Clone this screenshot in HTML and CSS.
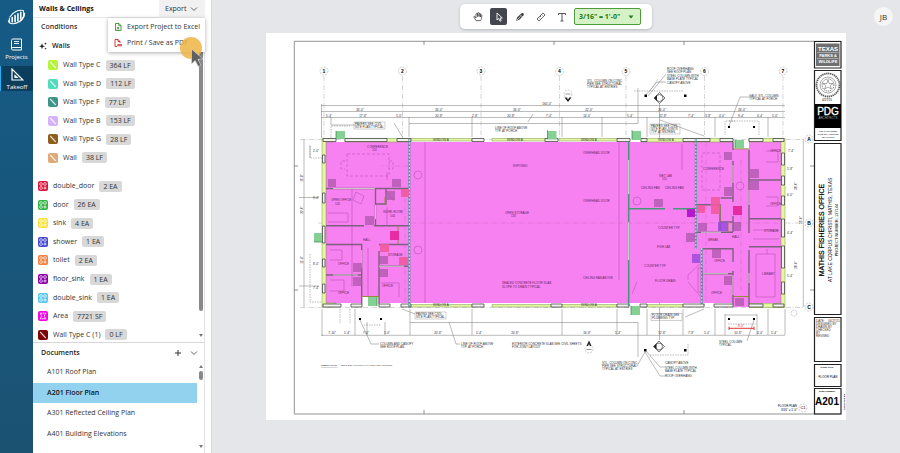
FILE: index.html
```
<!DOCTYPE html>
<html lang="en">
<head>
<meta charset="utf-8">
<title>Walls &amp; Ceilings – Takeoff</title>
<link rel="stylesheet" href="styles.css">
</head>
<body>
<svg class="defs" aria-hidden="true">
  <defs>
    <symbol id="line" viewBox="0 0 9 9"><path d="M2 1.800 7 7.200" stroke="#fff" stroke-width="1" stroke-opacity=".8"/></symbol>
    <symbol id="count" viewBox="0 0 9 9"><g fill="none" stroke="#fff" stroke-width=".8" stroke-opacity=".85"><rect x="1.600" y="1.600" width="2.200" height="2.200" rx=".6"/><rect x="5.200" y="1.600" width="2.200" height="2.200" rx=".6"/><rect x="1.600" y="5.200" width="2.200" height="2.200" rx=".6"/><path d="M6.300 4.900v2.800M4.900 6.300h2.800"/></g></symbol>
    <symbol id="area" viewBox="0 0 9 9"><path d="M2 2h5L5.600 4.500 7 7H2l1.300-2.500z" fill="none" stroke="#fff" stroke-width=".9" stroke-dasharray="1.600 .5"/></symbol>
    <symbol id="chevron" viewBox="0 0 8 8"><path d="M1 2.500 4 5.500 7 2.500" fill="none" stroke="#555" stroke-width=".9"/></symbol>
  </defs>
</svg>
<div class="app">
  <nav class="rail" aria-label="Main">
    <a class="brand" href="#" aria-label="Home">
      <svg viewBox="0 0 20 20"><g fill="none" stroke="#fff" stroke-linecap="round"><path d="M3 9C6 4 12 1 17 2c2 4 0 9-4 12" stroke-width="1.100"/><path d="M1.500 13c1 4 7 4 12 .5 3-2 5-6 5-8.500" stroke-width="1.200"/><path d="M5.500 9.500v4.500M8.500 7.500v6.500M11.500 5.500v7.500M14.500 4v7" stroke-width="1.700"/><path d="M2.500 10.500v3" stroke-width="1.200"/></g></svg>
    </a>
    <a class="rail-link" href="#">
      <svg viewBox="0 0 12 13"><g fill="none" stroke="#fff" stroke-width="1"><path d="M1 2.500C1 1.500 1.500 1 2.500 1H11v8.500H2.500C1.500 9.500 1 10 1 10.800S1.500 12 2.500 12H11V9.500M1 2.500v8.500"/><path d="M3.500 3.500h5M3.500 5.500h5" stroke-width=".9"/></g></svg>
      Projects</a>
    <a class="rail-link current" href="#" aria-current="page">
      <svg viewBox="0 0 13 13"><path d="M1 1v11h11zM4 7.500V9.500h2.200z" fill="none" stroke="#fff" stroke-width="1.200"/></svg>
      Takeoff</a>
  </nav>

  <aside class="panel">
    <header class="panel-head">
      <h1>Walls &amp; Ceilings</h1>
      <div class="export">
        <button class="export-button" type="button" aria-expanded="true">Export <svg><use href="#chevron"/></svg></button>
        <div class="menu">
          <button type="button"><svg viewBox="0 0 8 8"><path d="M1.500.5h3.500L7 2.500v5H1.500zM4.800.5v2.200H7M3 4l2 2.500M5 4 3 6.500" fill="none" stroke="#3c8f2c" stroke-width=".9"/></svg>Export Project to Excel</button>
          <button type="button"><svg viewBox="0 0 8 8"><path d="M3 7.500H1v-7h3l2 2v1.500M4 .5v2h2" fill="none" stroke="#cf2b2b" stroke-width=".9"/><path d="M3.300 5h4.700v2.300H3.300z" fill="#cf2b2b" opacity=".75"/></svg>Print / Save as PDF</button>
        </div>
        <svg class="pointer" viewBox="0 0 28 34" aria-hidden="true"><circle cx="12" cy="12" r="11" fill="#edb445" opacity=".86"/><path d="M12.500 13v15l3.700-3.500 3 6 2.700-1.400-3-5.800 5.100-.3z" fill="#606060" stroke="#ddd" stroke-width=".6"/></svg>
      </div>
    </header>

    <section class="conditions">
      <div class="conditions-body">
        <h2>Conditions</h2>
        <h3><svg viewBox="0 0 8 8"><path d="M3 1.200 3.800 3.500 6 4.300 3.800 5.100 3 7.300 2.200 5.100 0 4.300 2.200 3.500zM6.400.3l.4 1 1 .4-1 .4-.4 1-.4-1-1-.4 1-.4zM6.600 5.400l.3.900.9.300-.9.300-.3.900-.3-.9-.9-.3.900-.3z" fill="#222"/></svg>Walls</h3>
        <ul class="rows walls">
          <li><svg class="chip lime"><use href="#line"/></svg>Wall Type C <span class="qty">364 LF</span></li>
          <li><svg class="chip aqua"><use href="#line"/></svg>Wall Type D <span class="qty">112 LF</span></li>
          <li><svg class="chip teal"><use href="#line"/></svg>Wall Type F <span class="qty">77 LF</span></li>
          <li><svg class="chip lilac"><use href="#line"/></svg>Wall Type B <span class="qty">153 LF</span></li>
          <li><svg class="chip brown"><use href="#line"/></svg>Wall Type G <span class="qty">28 LF</span></li>
          <li><svg class="chip tan"><use href="#line"/></svg>Wall <span class="qty">38 LF</span></li>
        </ul>
        <ul class="rows items">
          <li><svg class="chip red"><use href="#count"/></svg>double_door <span class="qty">2 EA</span></li>
          <li><svg class="chip green"><use href="#count"/></svg>door <span class="qty">26 EA</span></li>
          <li><svg class="chip yellow"><use href="#count"/></svg>sink <span class="qty">4 EA</span></li>
          <li><svg class="chip blue"><use href="#count"/></svg>shower <span class="qty">1 EA</span></li>
          <li><svg class="chip orange"><use href="#count"/></svg>toilet <span class="qty">2 EA</span></li>
          <li><svg class="chip purple"><use href="#count"/></svg>floor_sink <span class="qty">1 EA</span></li>
          <li><svg class="chip sky"><use href="#count"/></svg>double_sink <span class="qty">1 EA</span></li>
          <li><svg class="chip magenta"><use href="#area"/></svg>Area <span class="qty">7721 SF</span></li>
          <li><svg class="chip maroon"><use href="#line"/></svg>Wall Type C (1) <span class="qty">0 LF</span></li>
        </ul>
      </div>
      <div class="scroll"><span class="thumb long"></span><span class="down"></span></div>
    </section>

    <section class="documents">
      <header class="documents-head">
        <h2>Documents</h2>
        <button type="button" aria-label="Add document"><svg viewBox="0 0 8 8"><path d="M4 1v6M1 4h6" stroke="#333" stroke-width="1"/></svg></button>
        <button type="button" aria-label="Collapse"><svg><use href="#chevron"/></svg></button>
      </header>
      <div class="documents-body">
        <ul>
          <li><a href="#">A101 Roof Plan</a></li>
          <li><a class="selected" href="#">A201 Floor Plan</a></li>
          <li><a href="#">A301 Reflected Ceiling Plan</a></li>
          <li><a href="#">A401 Building Elevations</a></li>
        </ul>
        <div class="scroll"><span class="up"></span><span class="thumb short"></span><span class="down"></span></div>
      </div>
    </section>
  </aside>

  <main class="canvas">
    <div class="topbar">
      <div class="toolbar">
        <button type="button" aria-label="Pan"><svg viewBox="0 0 10 10"><path d="M3 6 1.700 4.400C1 4 .6 4.600 1 5.200L3 8.600h4.500C8.500 7.500 8.800 6 8.800 3.300c0-.9-1.300-.9-1.300 0V5 2c0-.9-1.400-.9-1.400 0v2.600V1.300c0-.9-1.500-.9-1.500 0v3.300V2c0-.9-1.600-.9-1.600 0z" fill="none" stroke="#444" stroke-width=".8"/></svg></button>
        <button type="button" class="active" aria-label="Select"><svg viewBox="0 0 10 10"><path d="M3 1v7l1.700-1.500L6 9.200l1.200-.6L6 6h2.300z" fill="none" stroke="#fff" stroke-width=".9"/></svg></button>
        <button type="button" aria-label="Highlight"><svg viewBox="0 0 10 10"><path d="M1 9 2.300 5.200 6.500 1.300C8 .3 9.500 1.800 8.500 3.300L4.700 7.600z" fill="#444"/><path d="M1.800 8.200 5.500 4.500M5.200 2.800l2 2" stroke="#fff" stroke-width=".7"/></svg></button>
        <button type="button" aria-label="Measure"><svg viewBox="0 0 10 10"><path d="M1 7 7 1l2 2-6 6zM5.500 2.500l1 1M4 4l1 1M2.500 5.500l1 1" fill="none" stroke="#444" stroke-width=".8"/></svg></button>
        <button type="button" aria-label="Text"><svg viewBox="0 0 10 10"><path d="M1.500 3V1.500h7V3M5 1.500v7.500M3.500 9h3" fill="none" stroke="#444" stroke-width=".9"/></svg></button>
        <label class="scale">
          <select aria-label="Scale"><option>3/16" = 1'-0"</option></select>
          <svg viewBox="0 0 6 4"><path d="M.5.500h5L3 3.500z" fill="#237a12"/></svg>
        </label>
      </div>
      <button class="avatar" type="button" aria-label="Account">JB</button>
    </div>

    <svg class="sheet" viewBox="266 33 580 387" role="img" aria-label="A201 Floor Plan">
      <rect x="266" y="33" width="580" height="387" fill="#fff"/>
      <g fill="none" stroke="#777" stroke-width=".8">
        <path d="M841 41.300H294.300V414H841M424 41v4M554 41v4M684 41v4M294 166h4M294 290h4M810 166h4M810 290h4M684 414v-4M424 414v-4"/>
      </g>

      <!-- grid bubbles and centre lines -->
      <g fill="none" stroke="#aaa" stroke-width=".5" stroke-dasharray="5 1.500 1 1.500">
        <path d="M324 76v62M402.500 76v62M481 76v230M559.500 76v62M626 76v62M704.500 76v232M783 76v62M300 139.500h504M318 223h486M300 307.500h504"/>
      </g>
      <g class="bubbles">
        <circle cx="324" cy="71" r="4"/><circle cx="402.500" cy="71" r="4"/><circle cx="481" cy="71" r="4"/><circle cx="559.500" cy="71.500" r="4"/><circle cx="626" cy="71.500" r="4"/><circle cx="704.500" cy="71.500" r="4"/><circle cx="783" cy="71" r="4"/>
        <circle cx="809" cy="139" r="4"/><circle cx="809" cy="223" r="4"/><circle cx="809" cy="307" r="4"/><circle cx="803" cy="408" r="4"/><circle cx="794" cy="313" r="3"/><circle cx="568" cy="94" r="4"/><circle cx="589" cy="349" r="4"/>
      </g>
      <g class="bubble-text">
        <text x="324" y="73">1</text><text x="402.500" y="73">2</text><text x="481" y="73">3</text><text x="559.500" y="73">4</text><text x="626" y="73">5</text><text x="704.500" y="73">6</text><text x="783" y="73">7</text><text x="809" y="141">A</text><text x="809" y="225">B</text><text x="809" y="309">C</text><text class="thin" x="803" y="409">C1</text>
      </g>

      <!-- dimension strings -->
      <g fill="none" stroke="#777" stroke-width=".5">
        <path d="M321 105.500H785M321 111.500H785M321 117.500H785M321 335.300H785M304 139v168M803.300 139v168M310 145v13M299 197.500h20M299 286h20"/>
        <path d="M321.500 104v34M409 117v20M472 117v20M602 117v20M647 117v20M715 117v20M768 117v20M322 309v27M355 309v26M367 322v13M385 322v13M410 309v26M472 309v26M562 309v26M617 309v26M647 309v26M683 309v26M715 309v26M725 314v21M757 314v21M768 309v26M785 309v26M409 123.500h229V88M410 322.500h228V357M562 117v20M659.500 103v48M659.500 290v50"/>
        <path d="M394 123l9 15M355 125h-24v-8M360 320l11 24h8M449 322l7 22h4M402 309l13 5M645 96l12-14h9M648 96l18-22M729 126l11-29h9M660 120l44 16M704 309l-19 8M754 320l-7 21M645 352l-8 14M646 351l14 16h5M645 352l15 24h5M528 122l5-8"/>
        <path d="M729 121h30v14M725 135v-14h10M634 91h50M650 91l8-12M650 355h38v-12M331 138v-12h19M340 309v14M350 309v14M310 146v12h12M310 254v48h12M728 324h28M364 325h17" stroke-dasharray="1.500 1"/>
        <path d="M725 315h32"/>
      </g>
      <path d="M729 328.300h25M729 326.500v3.500M754 326.500v3.500" stroke="#d22" stroke-width=".9"/>
      <g class="dims" fill="#222">
        <text x="547" y="105">160'-0"</text>
        <text x="360" y="111">26'-0"</text><text x="439" y="111">26'-0"</text><text x="517" y="111">26'-0"</text><text x="589" y="111">22'-0"</text><text x="662" y="111">26'-0"</text><text x="742" y="111">26'-0"</text>
        <text x="329" y="117">5'-4"</text><text x="363" y="117">17'-8"</text><text x="399" y="117">5'-0"</text><text x="439" y="117">20'-8"</text><text x="475" y="117">2'-8"</text><text x="511" y="117">20'-8"</text><text x="549" y="117">7'-4"</text><text x="587" y="117">14'-0"</text><text x="630" y="117">5'-4"</text><text x="663" y="117">12'-8"</text><text x="691" y="117">7'-4"</text><text x="708" y="117">3'-8"</text><text x="722" y="117">4'-0"</text><text x="741" y="117">9'-4"</text><text x="760" y="117">4'-4"</text><text x="775" y="117">5'-0"</text>
        <text x="332" y="334">7'-10"</text><text x="347" y="334">5'-4"</text><text x="366" y="334">7'-0"</text><text x="387" y="334">5'-0"</text><text x="438" y="334">20'-8"</text><text x="479" y="334">5'-4"</text><text x="515" y="334">20'-8"</text><text x="587" y="334">16'-8"</text><text x="618" y="334">5'-4"</text><text x="662" y="334">12'-8"</text><text x="691" y="334">7'-8"</text><text x="707" y="334">5'-0"</text><text x="738" y="334">10'-8"</text><text x="760" y="334">4'-0"</text><text x="774" y="334">5'-4"</text><text x="741" y="327" fill="#d22">8'-0"</text>
        <text transform="translate(303 210) rotate(-90)">20'-0"</text><text transform="translate(303 260) rotate(-90)">11'-4"</text><text transform="translate(303 178) rotate(-90)">16'-8"</text><text transform="translate(802 220) rotate(-90)">56'-0"</text><text transform="translate(797 186) rotate(-90)">28'-0"</text><text transform="translate(797 265) rotate(-90)">28'-0"</text>
        <text x="791" y="152">7'-4"</text><text x="790" y="170">5'-8"</text><text x="790" y="196">6'-0"</text><text x="790" y="234">4'-4"</text><text x="790" y="277">5'-4"</text><text x="316" y="152">2'-0"</text><text x="316" y="199">9'-4"</text><text x="316" y="265">8'-0"</text><text x="316" y="289">7'-4"</text>
      </g>

      <!-- area takeoff -->
      <path fill="#f881f1" d="M326 142H733V149H749V142H781V303H749V307H733V303H379V297H361V303H326z"/>
      <!-- exterior walls -->
      <g fill="#e4f8a0" stroke="#7f9150" stroke-width=".5">
        <path d="M322 138.500h11v3.500h-7v161h10v4h-14zM345 138.500h64v3.500h-64zM409 138.500h63v2.500h-63zM492 138.500h56v2.500h-56zM559 138.500h60v2.500h-60zM641 138.500h92v3.500h-92zM749 138.500h36v169h-36v-4h32v-161.500h-32zM409 304.500h63v2.500h-63zM492 304.500h125v2.500h-125zM641 304.500h42v2.500h-42z"/>
      </g>
      <g fill="#f3f3ee" stroke="#333" stroke-width=".7">
        <path d="M323 138.500h13v3h-13zM345 138.500h42v3h-42zM397 138.500h14v3h-14zM472 138.500h12v3h-12zM545 138.500h13v3h-13zM617 138.500h13v3h-13zM641 138.500h6v3h-6zM683 138.500h27v3h-27zM720 138.500h13v3h-13zM749 138.500h14v3h-14zM773 138.500h11v3h-11zM323 304h18v3h-18zM351 304h11v3h-11zM379 304h11v3h-11zM401 304h10v3h-10zM472 304h12v3h-12zM551 304h11v3h-11zM617 304h12v3h-12zM640 304h7v3h-7zM683 304h21v3h-21zM714 304h19v3h-19zM749 304h14v3h-14zM773 304h11v3h-11zM781.500 153h3v12h-3zM781.500 176h3v9h-3zM781.500 196h3v9h-3zM781.500 219h3v18h-3zM781.500 246h3v22h-3zM781.500 282h3v12h-3zM322.500 155h2.500v8h-2.500zM322.500 193h2.500v10h-2.500zM322.500 226h2.500v17h-2.500zM322.500 259h2.500v8h-2.500zM322.500 284h2.500v9h-2.500z"/>
      </g>
      <!-- partitions -->
      <g fill="none" stroke="#7d617f" stroke-width="1.400">
        <path d="M326 188.500h82M375.500 189v36.500M326 225.700h38M374 225.700h35M326 244.500h35.700V304M326 275h35.700M379 304V251M379 244.500h29M379 266.300h30M386 189v15h-10M733 142v8M733 161v41M733 216v16M696 204.700h24v26M720.700 198h12.600M720.700 222h12.600M696 232.300h37M701 248.700h32V262M701 273.700h32M733 271v33M749 150v83M749 250v54M749 180h32M749 218.700h32M749 246.700h32"/>
      </g>
      <g fill="none" stroke="#f2f2ea" stroke-width=".7">
        <path d="M333 188.500h42M333 275h25M379 266.300h25M361.700 250v18M375.500 205v14M733 165v18M733 275v20M749 190v15M749 273v10M703 273.700h25M701 232.300h20"/>
      </g>
      <g fill="none" stroke="#8a8a28" stroke-width=".9"><path d="M361 296.500h18M733 296.500h16M733 148.800h16M398 225.700v18.500M720 205v16M728 222v10M385 197v8"/></g>
      <path d="M628.700 142v164M629 208.700h36M673 208.700h23" fill="none" stroke="#47987b" stroke-width="1.600"/>
      <path d="M628.700 160v34M628.700 222v38" fill="none" stroke="#ccecdd" stroke-width="1"/>
      <g fill="none" stroke-width="2"><path d="M409.300 139v168M695.800 139v110M701.700 248v56" stroke="#4d8d91"/><path d="M409.300 139v168M695.800 139v110M701.700 248v56" stroke="#b5dbe7" stroke-width="1.200" stroke-dasharray="2 1.500"/></g>

      <!-- furniture and interior references -->
      <g fill="none" stroke="#9a3d99" stroke-width=".4">
        <path d="M347 154h42v22h-42zM345 161h-4v8h4M389 161h4v8h-4M702 153h18v37h-18z" stroke-dasharray="3 2"/>
        <path d="M756 254h19v43h-19zM767 249v5M766 151h12v11h-12M766 197h12v9h-12M753 230h26M753 239h26M356 192l8 4-3 8-8-4zM328 213h20v9h-20M330 250h12v10h-12M330 280h14v11h-14M381 283h18v14M386 191l8 10M425 142v161M619 142v138M688 275l14-13M688 282l12 14M688 280v-5M698 268h4v24h-4zM387 172v8M352 189v98M368 248v48M387 207v18M682 144v26M637 282l-5 12"/>
        <path d="M411 223h286M409 166h-28M701 223h79M741 160v130M405 189v115M706 142v160" stroke-dasharray="5 1.500 1 1.500" stroke="#bf61b8"/>
        <circle cx="418" cy="175" r="4"/><circle cx="418" cy="250" r="4"/><circle cx="637" cy="201" r="4"/><circle cx="740" cy="186" r="4"/>
      </g>

      <!-- counted symbols -->
      <g fill="#a654a7"><path d="M328 179h8v8h-8zM392 179h9v8h-9zM387 191h8v9h-8zM365 216h9v9h-9zM379 256h9v8h-9zM353 263h9v9h-9zM353 277h9v9h-9zM379 269h9v8h-9zM654 199h9v8h-9zM724 152h8v8h-8zM724 187h8v9h-8zM750 169h9v9h-9zM750 181h9v9h-9zM698 223h9v8h-9zM733 222h8v9h-8zM686 233h9v9h-9zM712 249h9v9h-9zM724 276h8v9h-8zM735 298h9v8h-9z" opacity=".7"/></g>
      <path fill="#ef5a9e" opacity=".9" d="M401 189h8v8h-8zM380 244h9v8h-9zM399 257h9v8h-9zM711 197h9v8h-9zM697 205h8v8h-8zM711 205h9v9h-9z"/>
      <path fill="#e62ba3" d="M390 231h9v9h-9zM733 206h9v9h-9z"/>
      <path fill="#b717ce" d="M687 209h8v8h-8z"/>
      <path fill="#9548dc" d="M718 222h10v9h-10zM692 254h8v9h-8z" opacity=".8"/>
      <path fill="#85d193" d="M336 131h9v8h-9zM547.500 131h9v8.500h-9zM632 131h9v9h-9zM735 140h9v8h-9zM314 233h8v9h-8zM368 297h9v9h-9zM631 306h9v9h-9z"/>
      <g stroke="#24713a" stroke-width=".6"><path d="M336 131v8M547.500 130v9M632 130v9M735 140v8M314 242h8M377 297v9M631 315v-9"/></g>

      <!-- columns, section and elevation marks -->
      <path d="M644.500 94.500h2.500v2.500h-2.500zM684 94.500h2.500v2.500h-2.500zM728 126h2v2h-2zM753 126h2v2h-2zM359 318h2v2h-2zM380 318h2v2h-2zM644 349h2.500v2.500h-2.500zM684 349h2.500v2.500h-2.500zM728 318h2v2h-2zM753 318h2v2h-2z"/>
      <g fill="#fff" stroke="#222" stroke-width=".6"><path d="M654 98l5.500-5.500L665 98l-5.500 5.500zM653.500 346.500l5.500-5.500 5.500 5.500-5.500 5.500z"/><circle cx="659.500" cy="98" r="3.500"/><circle cx="659" cy="346.500" r="3.500"/></g>
      <path d="M654 98l3-3v6zM653.500 346.500l3-3v6zM564.500 97.500h2l1.500 2 1.500-2h2L568 102zM586.500 346l2.500-5.500 2.500 5.500h-1.500l-1-2-1 2z" fill="#222"/>
      <path d="M565.500 94h5M586.500 349.500h5" stroke="#555" stroke-width=".6"/>

      <!-- notes -->
      <g class="notes">
        <path d="M354 122h31v7h-31zM650 124h30v10h-30zM651 313.500h31v7h-31zM415 312h31v7h-31z" fill="none" stroke="#888" stroke-width=".4"/>
        <text x="355" y="125">PAVERS SEE CIVIL</text><text x="355" y="128">SITE PLAN TYPICAL</text>
        <text x="495" y="129">LINE OF ROOF ABOVE</text><text x="495" y="132">TYP. AT PORCH</text>
        <text x="587" y="82">STL. COLUMN ON CONC.</text><text x="587" y="85">PIER SEE STRUCTURAL</text><text x="587" y="88">TYPICAL AT ENTRIES</text>
        <text x="667" y="70">ROOF OVERHANG</text><text x="667" y="73">SEE ROOF PLAN</text><text x="667" y="77">STEEL COLUMN WITH</text><text x="667" y="80">BASE PLATE TYPICAL</text><text x="667" y="84">CANOPY ABOVE</text>
        <text x="749" y="97">GALV. STL. COLUMN</text><text x="749" y="100">TYPICAL AT PORCH</text>
        <text x="651" y="127">PAVERS SEE CIVIL</text><text x="651" y="130">SITE PLAN JOINTS</text><text x="651" y="133">TYP. AT ENTRIES</text>
        <text x="433" y="141">WINDOW A</text><text x="507" y="141">WINDOW A</text><text x="581" y="141">WINDOW A</text><text x="658" y="141">WINDOW A</text><text x="433" y="306">WINDOW A</text><text x="581" y="306">WINDOW A</text>
        <text x="416" y="315">PAVING SEE CIVIL</text><text x="416" y="318">SITE PLAN TYPICAL</text>
        <text x="380" y="345">COLUMN AND CANOPY</text><text x="380" y="348">SEE ROOF PLAN</text>
        <text x="461" y="345">LINE OF ROOF ABOVE</text><text x="461" y="348">TYP. AT PORCH</text>
        <text x="512" y="345">EXTERIOR CONCRETE SLAB SEE CIVIL SHEETS</text><text x="512" y="348">FOR JOINT LAYOUT</text>
        <text x="652" y="316">FLOOR DRAIN SEE</text><text x="652" y="319">PLUMBING TYP.</text>
        <text x="602" y="364">STL. COLUMN ON CONC.</text><text x="602" y="367">PIER SEE STRUCTURAL</text><text x="602" y="370">TYPICAL AT ENTRIES</text>
        <text x="665" y="364">CANOPY ABOVE</text><text x="665" y="369">STEEL COLUMN WITH</text><text x="665" y="372">BASE PLATE TYPICAL</text><text x="665" y="377">ROOF OVERHANG</text>
        <text x="719" y="343">STEEL COLUMN</text><text x="719" y="346">TYPICAL</text>
        <text x="321" y="366" class="strong">GENERAL NOTE:</text><text class="micro" x="341" y="366">SEE SHEET A001 FOR WALL TYPES AND PARTITIONS</text>
      </g>
      <g class="notes rooms">
        <text x="367" y="148">CONFERENCE</text><text x="372" y="151">101</text><text x="331" y="201">OPEN OFFICE</text><text x="335" y="205">102</text><text x="383" y="213">WORK ROOM</text><text x="390" y="217">104</text><text x="338" y="265">OFFICE</text><text x="338" y="294">OFFICE</text><text x="382" y="287">OFFICE</text><text x="363" y="241">HALL</text><text x="388" y="256">STORAGE</text>
        <text x="505" y="214">OPEN STORAGE</text><text x="511" y="217">118</text><text x="513" y="167">EXPOSED</text><text x="583" y="154">OVERHEAD DOOR</text><text x="583" y="202">OVERHEAD DOOR</text><text x="583" y="279">CEILING FAN ABOVE</text><text x="659" y="177">WET LAB</text><text x="662" y="180">115</text><text x="641" y="189">CEILING FAN</text><text x="665" y="189">CEILING FAN</text><text x="658" y="229">COUNTER TYP.</text><text x="657" y="248">FISH LAB</text><text x="644" y="267">COUNTER TYP.</text><text x="655" y="282">FLOOR DRAIN</text><text x="502" y="284">SEALED CONCRETE FLOOR SLAB</text><text x="502" y="288">SLOPE TO DRAIN TYPICAL</text>
        <text x="703" y="170">CONFERENCE</text><text x="770" y="152">OFFICE</text><text x="770" y="205">OFFICE</text><text x="764" y="232">STORAGE</text><text x="762" y="275">LIBRARY</text><text x="714" y="262">OFFICE</text><text x="711" y="294">OFFICE</text><text x="708" y="241">BREAK</text><text x="732" y="238">HALL</text>
      </g>
      <text class="small" x="778" y="407">FLOOR PLAN</text><text class="small" x="781" y="411">3/16" = 1'-0"</text>

      <!-- title block -->
      <g fill="none" stroke="#222" stroke-width="1.200">
        <path d="M814.500 41.500h26.500V68h-26.500zM814.500 70.500h26.500v70h-26.500zM814.500 143.500h26.500v171h-26.500zM814.500 317.500h26.500v44h-26.500zM814.500 364.500h26.500v22h-26.500zM814.500 388.500h26.500v25.500h-26.500z"/>
      </g>
      <path fill="#6f6f6f" d="M816 43.500h23.500V66H816z"/><path d="M817 52.500h21.500M817 58.500h21.500" stroke="#ddd" stroke-width=".5"/>
      <g class="agency"><text class="big" x="828" y="51">TEXAS</text><text x="828" y="57">PARKS &amp;</text><text x="828" y="63">WILDLIFE</text></g>
      <g fill="none" stroke="#555"><circle cx="828" cy="85" r="11.500" stroke-width="1.800" stroke-dasharray="1.300 .700"/><circle cx="828" cy="85" r="8" stroke-width=".5"/><circle cx="828" cy="85" r="6" stroke-width="1" stroke-dasharray="1 1"/><path d="M828 80l1.200 3.500h4l-3 2 1.200 3.500-3.400-2-3.400 2 1.200-3.500-3-2h4z" stroke-width=".5"/></g>
      <path d="M815 104h26v24h-26z"/>
      <g class="centered"><text class="small" x="827" y="101">4/27/15</text><text class="pdg" x="828" y="115">PDG</text><text class="small light" x="828" y="119">ARCHITECTS</text><text class="micro" x="828" y="132">1000 MAIN STREET</text><text class="micro" x="828" y="135">SUITE 200, HOUSTON</text><text class="micro" x="828" y="138">TEXAS 77002</text>
        <text class="project" transform="translate(824 230) rotate(-90)">MATHIS FISHERIES OFFICE</text>
        <text class="place" transform="translate(832 230) rotate(-90)">AT LAKE CORPUS CHRISTI, MATHIS, TEXAS</text>
        <text class="number" transform="translate(838 230) rotate(-90)">PROJECT NUMBER: 127144</text>
        <text class="micro heavy" x="827" y="368">SHEET TITLE</text><text class="small" x="828" y="378">FLOOR PLAN</text><text class="micro heavy" x="827" y="392">SHEET NUMBER</text><text class="sheet-no" x="827" y="405">A201</text>
        <text class="micro heavy" transform="translate(845 402) rotate(-90)">ISSUED FOR BID</text>
      </g>
      <g class="notes"><text x="816" y="322">DATE:</text><text x="828" y="322">04/27/15</text><text x="816" y="325">DESIGNED BY</text><text x="816" y="328">DRAWN BY</text><text x="816" y="331">CHECKED</text><text x="816" y="334">BY</text><text x="816" y="337">REVISED</text></g>
    </svg>
  </main>
</div>
</body>
</html>
```

FILE: styles.css
```
* { box-sizing: border-box; }
body { margin: 0; font-family: "Open Sans", "Noto Sans", sans-serif; font-size: 7px; line-height: 10px; color: #333; }
h1, h2, h3, ul { margin: 0; padding: 0; font-size: 7px; }
h1, h2, h3 { font-weight: 600; color: #222; }
ul { list-style: none; }
button, select { font: inherit; color: inherit; border: 0; background: none; padding: 0; }
a { color: inherit; text-decoration: none; }
svg { display: block; flex: none; }
.defs { position: absolute; width: 0; height: 0; }

.app { display: grid; grid-template-columns: 33px 179px 1fr; min-height: 100vh; background: #e5e6ea; }

.rail { background: linear-gradient(#155b86, #1b5272); color: #fff; display: flex; flex-direction: column; font-size: 6px; }
.brand { padding: 8px 7px 6px; }
.brand svg { width: 19px; height: 20px; }
.rail-link { display: flex; flex-direction: column; align-items: center; gap: 1px; padding: 4px 0; height: 32px; }
.rail-link svg { width: 13px; height: 13px; }
.rail-link.current { background: #0b3d5c; border-left: 1px solid #20b0f5; height: 25px; padding: 2px 0 0; }

.panel { background: #fff; border-right: 1px solid #d9d9dc; display: flex; flex-direction: column; padding-right: 6px; min-width: 0; }
.panel-head { display: flex; height: 18px; align-items: center; justify-content: space-between; padding-left: 6px; border-bottom: 1px solid #e7e7e7; }
.panel-head h1 { color: #111; font-weight: 700; }
.export { position: relative; z-index: 2; align-self: stretch; }
.export-button { display: flex; align-items: center; gap: 4px; height: 18px; width: 46px; padding-left: 6px; background: #f1f1f1; }
.export-button svg, .documents-head svg { width: 8px; height: 8px; }
.menu { position: absolute; right: 0; top: 18px; width: 97px; height: 34px; background: #fff; box-shadow: 0 1px 4px #0005; padding: 1px 0; }
.menu button { display: flex; align-items: center; gap: 5px; height: 16px; padding-left: 6px; white-space: nowrap; }
.menu svg { width: 8px; height: 8px; }
.pointer { position: absolute; left: 20px; top: 36px; width: 28px; height: 34px; }

.conditions { display: flex; height: 325px; border-right: 1px solid #e3e3e3; border-bottom: 1px solid #d8d8d8; }
.conditions-body { flex: 1; min-width: 0; }
.conditions h2 { height: 18px; line-height: 18px; padding-left: 8px; color: #333; }
.conditions h3 { display: flex; align-items: center; gap: 5px; height: 20px; padding-left: 6px; }
.conditions h3 svg { width: 8px; height: 8px; }
.rows { display: grid; grid-auto-rows: 1fr; color: #333; }
.rows li { display: flex; align-items: center; gap: 5px; white-space: nowrap; }
.walls { height: 111px; padding-left: 15px; }
.items { height: 167px; margin-top: 10px; padding-left: 5px; }
.qty { background: #d9d8d8; border-radius: 2px; height: 11px; line-height: 11px; padding: 0 4px; }
.chip { width: 10px; height: 10px; border-radius: 2px; }
.lime { background: #b4f43a; } .aqua { background: #4fdbbd; } .teal { background: #3f9488; } .lilac { background: #d5b2fb; }
.brown { background: #8f5d1e; } .tan { background: #ddaa78; } .red { background: #dc143c; } .green { background: #32b544; }
.yellow { background: #fae23a; } .blue { background: #4647d2; } .orange { background: #f2803c; } .purple { background: #8c02a8; }
.sky { background: #57c8f2; } .magenta { background: #f506e4; } .maroon { background: #7c0008; }

.scroll { width: 7px; display: flex; flex-direction: column; align-items: center; }
.thumb { width: 4px; border-radius: 2px; background: #898989; }
.thumb.long { height: 275px; margin-top: 18px; }
.thumb.short { height: 9px; margin-top: 3px; }
.up, .down { border: 2px solid transparent; width: 0; height: 0; }
.up { border-top: 0; border-bottom: 3px solid #777; }
.down { border-bottom: 0; border-top: 3px solid #777; margin: auto 0 5px; }

.documents { flex: 1; display: flex; flex-direction: column; border-right: 1px solid #e3e3e3; }
.documents-head { display: flex; align-items: center; gap: 8px; height: 19px; padding: 0 6px 0 8px; }
.documents-head h2 { flex: 1; }
.documents-body { flex: 1; display: flex; }
.documents-body ul { flex: 1; display: grid; grid-auto-rows: 1fr; height: 82px; }
.documents a { display: flex; align-items: center; height: 100%; padding-left: 14px; color: #333; }
.documents a.selected { background: #92d2ee; font-weight: 600; color: #111; }
.documents .scroll { padding-top: 3px; }

.canvas { padding: 4px 54px 33px 54px; min-width: 0; }
.topbar { display: grid; grid-template-columns: 1fr auto 1fr; height: 25px; margin: 0 -47px 4px; align-items: center; }
.toolbar { grid-column: 2; display: flex; align-items: center; gap: 4px; height: 25px; padding: 0 11px 0 9px; background: #fff; border-radius: 5px; box-shadow: 0 1px 3px #0003; }
.toolbar button { width: 17px; height: 17px; display: grid; place-items: center; border-radius: 2px; }
.toolbar button svg { width: 10px; height: 10px; }
.toolbar .active { background: #43474d; }
.scale { position: relative; color: #237a12; }
.scale select { display: block; appearance: none; width: 67px; height: 17px; padding: 0 4px; border: 1px solid #4f9b3c; border-radius: 2px; background: #d5f2c6; font-weight: 700; }
.scale svg { position: absolute; right: 7px; top: 7px; width: 6px; height: 4px; }
.avatar { justify-self: end; width: 19px; height: 19px; border-radius: 50%; background: #f5f5f5; font-size: 8px; }
.sheet { width: 100%; height: auto; font-family: "Liberation Sans", Arial, sans-serif; }

.bubbles { fill: #fff; stroke: #999; stroke-width: .5; stroke-dasharray: 2 1; }
.bubble-text { font-size: 5px; font-weight: 700; text-anchor: middle; }
.bubble-text .thin { font-size: 4px; font-weight: 400; }
.dims { font-size: 3px; text-anchor: middle; }
.notes { font-size: 3px; fill: #333; }
.notes .strong { font-weight: 700; text-decoration: underline; font-size: 2px; }
.rooms { fill: #632764; }
.small { font-size: 3px; }
.micro, .notes .micro { font-size: 2px; }
.heavy { font-weight: 700; }
.light { fill: #aaa; }
.centered, .agency { text-anchor: middle; }
.agency { fill: #fff; font-weight: 700; font-size: 4px; }
.agency .big { font-size: 6px; }
.pdg { font-size: 10px; fill: #fff; stroke: #fff; stroke-width: .3; }
.project { font-size: 7px; stroke: #000; stroke-width: .2; }
.place { font-size: 5px; }
.number { font-size: 4px; }
.sheet-no { font-size: 10px; font-weight: 700; }
```
